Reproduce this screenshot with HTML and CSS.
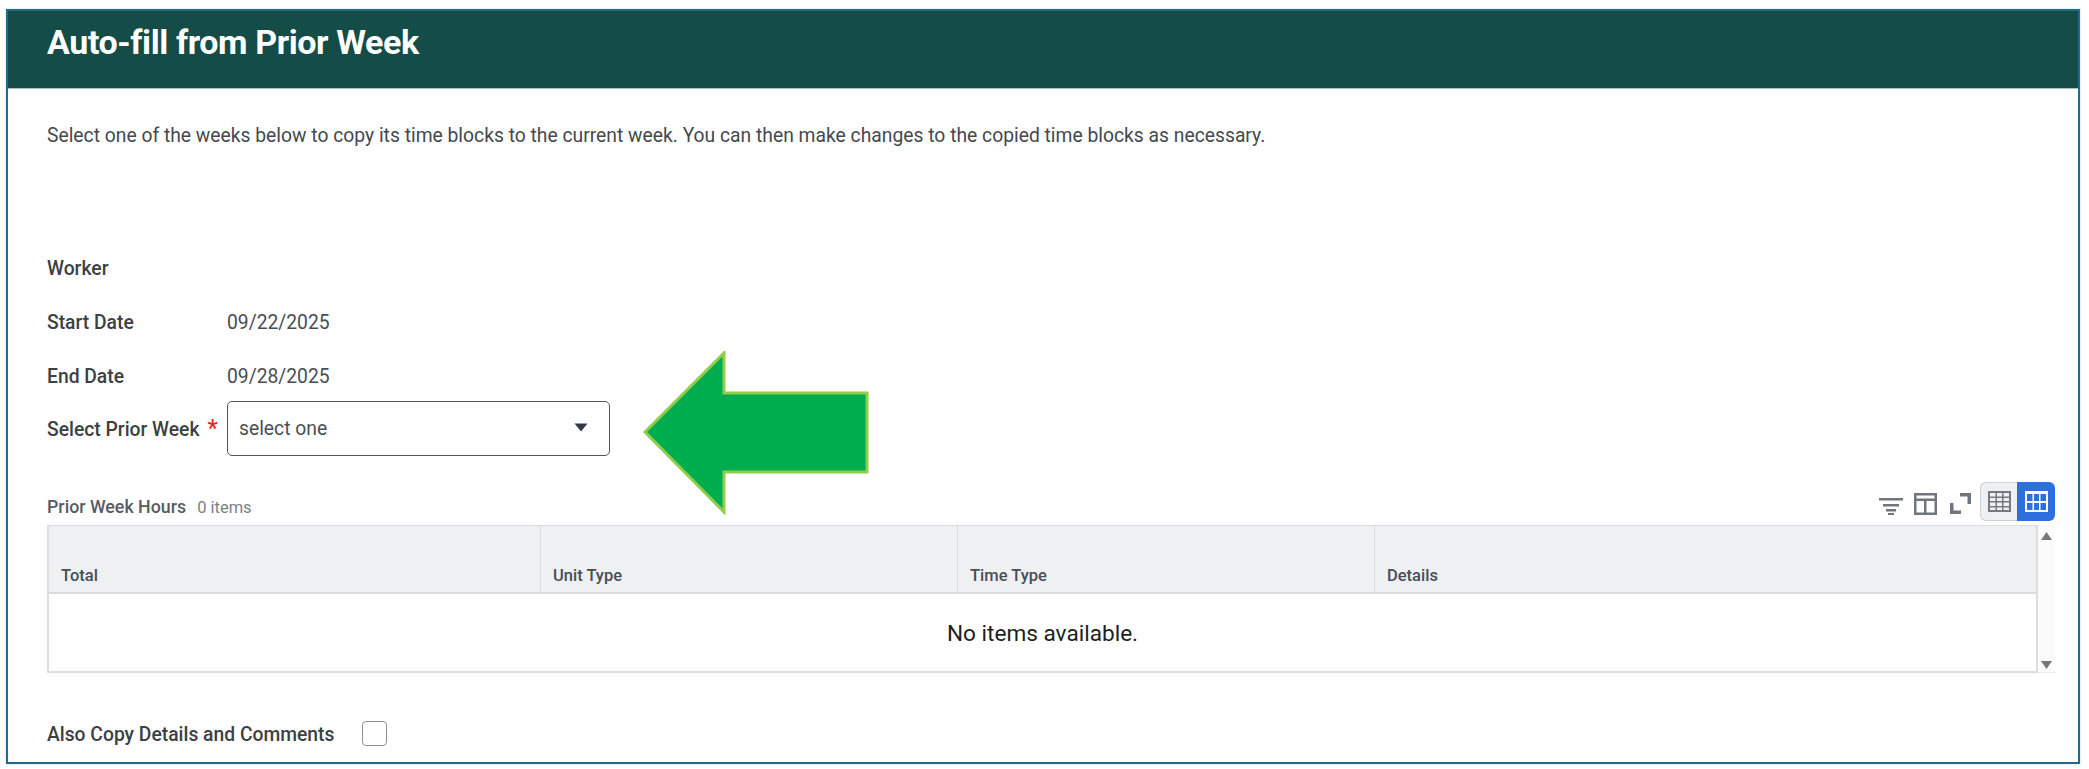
FILE: index.html
```html
<!DOCTYPE html>
<html lang="en">
<head>
<meta charset="utf-8">
<title>Auto-fill from Prior Week</title>
<link rel="stylesheet" href="styles.css">
</head>
<body>
<div class="frame">
  <header class="banner"><h1>Auto-fill from Prior Week</h1></header>
  <main class="content">
    <p class="intro">Select one of the weeks below to copy its time blocks to the current week. You can then make changes to the copied time blocks as necessary.</p>
    <div class="form">
      <div class="row row-a"><span class="label">Worker</span></div>
      <div class="row row-b"><span class="label">Start Date</span><span class="value">09/22/2025</span></div>
      <div class="row row-end"><span class="label">End Date</span><span class="value">09/28/2025</span></div>
      <div class="row row-select">
        <span class="label">Select Prior Week<span class="star">*</span></span>
        <div class="select"><span>select one</span>
          <svg class="caret" width="14" height="9" viewBox="0 0 14 9"><path d="M0.5 0.5h13L7 8.500z"/></svg>
        </div>
      </div>
    </div>
    <div class="toolbar">
      <div class="grid-title"><strong>Prior Week Hours</strong><span>0 items</span></div>
      <div class="tools">
        <svg class="tool tool-filter" width="24" height="18" viewBox="0 0 24 18"><path d="M0 1h24v2.500H0zM4 7h16v2.500H4zM7 12h10v2.500H7zM9 16h6v2H9z"/></svg>
        <svg class="tool tool-cols" width="23" height="22" viewBox="0 0 23 22"><path fill-rule="evenodd" d="M0 0h23v22H0zM2.500 2.500v3h18v-3zM2.500 8v11.500h7.500V8zM12.500 8v11.500h8V8z"/></svg>
        <svg class="tool tool-expand" width="21" height="21" viewBox="0 0 21 21"><path d="M10 0h11v11h-3.500V3.500H10zM0 10h3.500v7.500H11V21H0z"/></svg>
        <div class="toggle">
          <span class="toggle-off">
            <svg width="23" height="21" viewBox="0 0 23 21"><path fill-rule="evenodd" d="M0 0h23v21H0zM2 2v3.500h5.500V2zM9 2v3.500h5V2zM15.500 2v3.500H21V2zM2 7v3h5.500V7zM9 7v3h5V7zM15.500 7v3H21V7zM2 11.500V15h5.500v-3.500zM9 11.500V15h5v-3.500zM15.500 11.500V15H21v-3.500zM2 16.500V19h5.500v-2.500zM9 16.500V19h5v-2.500zM15.500 16.500V19H21v-2.500z"/></svg>
          </span>
          <span class="toggle-on">
            <svg width="23" height="21" viewBox="0 0 23 21"><path fill-rule="evenodd" d="M0 0h23v21H0zM2 3v7h5.500V3zM9 3v7h5V3zM15.500 3v7H21V3zM2 12v7h5.500v-7zM9 12v7h5v-7zM15.500 12v7H21v-7z"/></svg>
          </span>
        </div>
      </div>
    </div>
    <div class="grid-wrap">
      <div class="grid">
        <div class="grid-head">
          <div class="col col-1">Total</div>
          <div class="col col-2">Unit Type</div>
          <div class="col col-3">Time Type</div>
          <div class="col col-4">Details</div>
        </div>
        <div class="grid-empty">No items available.</div>
      </div>
      <div class="scroll">
        <svg width="11" height="8" viewBox="0 0 11 8"><path d="M5.500 0L11 8H0z"/></svg>
        <svg width="11" height="8" viewBox="0 0 11 8"><path d="M0 0h11L5.500 8z"/></svg>
      </div>
    </div>
    <div class="copy-row">
      <span class="copy-label">Also Copy Details and Comments</span>
      <span class="checkbox"></span>
    </div>
  </main>
</div>
<svg class="arrow" width="228" height="164" viewBox="0 0 228 164"><path d="M3 81L82 2V42H225V121H82V161Z"/></svg>
</body>
</html>
```
FILE: styles.css
```css
* { box-sizing: border-box; }
html, body { margin: 0; padding: 0; background: #fff; }
body {
  width: 2089px;
  height: 769px;
  overflow: hidden;
  position: relative;
  font-family: Roboto, "Liberation Sans", sans-serif;
  color: #3c444d;
}
.frame {
  margin: 9px 0 0 6px;
  width: 2074px;
  height: 755px;
  border: 2px solid #24688a;
  box-shadow: 0 0 2px #b9d3e0;
  overflow: hidden;
}
.banner {
  height: 78px;
  background: #144c47;
  border-bottom: 1px solid #a9bdc3;
  padding-left: 39px;
  display: flex;
  align-items: flex-start;
}
.banner h1 {
  margin: 11px 0 0;
  font-size: 34px;
  line-height: 40px;
  font-weight: 700;
  color: #fff;
  letter-spacing: -0.4px;
}
.content { padding: 35px 23px 0 39px; }
.intro { margin: 0; font-size: 19.300px; line-height: 24px; color: #45494e; }
.form { margin-top: 94px; }
.row { display: flex; align-items: center; font-size: 19.300px; }
.row-a { height: 53px; }
.row-b { height: 54px; }
.row-end { height: 52px; padding-top: 3px; }
.row-select { height: 55px; }
.label { width: 180px; flex: none; font-weight: 500; color: #3c3f44; white-space: nowrap; }
.value { color: #494e54; }
.star { color: #de2e21; font-size: 23px; margin-left: 8px; line-height: 1; }
.select {
  width: 383px;
  height: 55px;
  border: 1.500px solid #4c5761;
  border-radius: 5px;
  padding: 0 21px 0 11px;
  display: flex;
  align-items: center;
  justify-content: space-between;
  background: #fff;
  color: #4a4f55;
}
.caret { fill: #2f3a45; margin-top: -2px; }
.toolbar {
  margin-top: 26px;
  height: 39px;
  display: flex;
  justify-content: space-between;
}
.grid-title { padding-top: 15px; font-size: 16.500px; line-height: 20px; }
.grid-title strong { font-size: 17.800px; font-weight: 500; color: #565c63; }
.grid-title span { color: #7b8087; margin-left: 11px; }
.tools { display: flex; align-items: flex-start; }
.tool { fill: #71767c; flex: none; }
.tool-filter { margin-top: 15px; }
.tool-cols { margin: 11px 0 0 11px; }
.tool-expand { margin: 11px 9px 0 13px; }
.toggle { display: flex; width: 75px; height: 39px; }
.toggle-off, .toggle-on { display: flex; align-items: center; justify-content: center; }
.toggle-off {
  width: 37px;
  background: #eff0f2;
  border: 1px solid #ced1d5;
  border-right: 0;
  border-radius: 6px 0 0 6px;
  fill: #737a82;
}
.toggle-on {
  width: 38px;
  background: #2e6fe0;
  border-radius: 0 6px 6px 0;
  fill: #fff;
}
.grid-wrap { margin-top: 4px; display: flex; height: 148px; }
.grid {
  width: 1991px;
  border: 2px solid #dcdddf;
  border-top-width: 1px;
  display: flex;
  flex-direction: column;
}
.grid-head {
  height: 68px;
  display: flex;
  background: #eff0f2;
  border-bottom: 2px solid #d9dbdd;
}
.col {
  padding: 0 12px 6px;
  display: flex;
  align-items: flex-end;
  font-size: 16.500px;
  line-height: 20px;
  font-weight: 500;
  color: #474e56;
  border-right: 1px solid #d9dbdd;
}
.col-1 { width: 492px; }
.col-2 { width: 417px; }
.col-3 { width: 417px; }
.col-4 { flex: 1; border-right: 0; }
.grid-empty {
  flex: 1;
  display: flex;
  align-items: center;
  justify-content: center;
  padding-top: 2px;
  font-size: 22.600px;
  color: #1d1f22;
}
.scroll {
  width: 17px;
  background: #fbfbfb;
  border-bottom: 1px solid #ececec;
  padding: 7px 0 3px;
  display: flex;
  flex-direction: column;
  align-items: center;
  justify-content: space-between;
  fill: #777;
}
.copy-row { margin-top: 48px; height: 25px; display: flex; align-items: center; }
.copy-label { width: 315px; padding-top: 2px; font-size: 19.300px; font-weight: 500; color: #3c3f44; }
.checkbox {
  width: 25px;
  height: 25px;
  border: 1.500px solid #8b9096;
  border-radius: 4px;
  background: #fff;
}
.arrow {
  position: absolute;
  left: 642px;
  top: 351px;
  fill: #00ad4e;
  stroke: #8fce4a;
  stroke-width: 3;
}
```
